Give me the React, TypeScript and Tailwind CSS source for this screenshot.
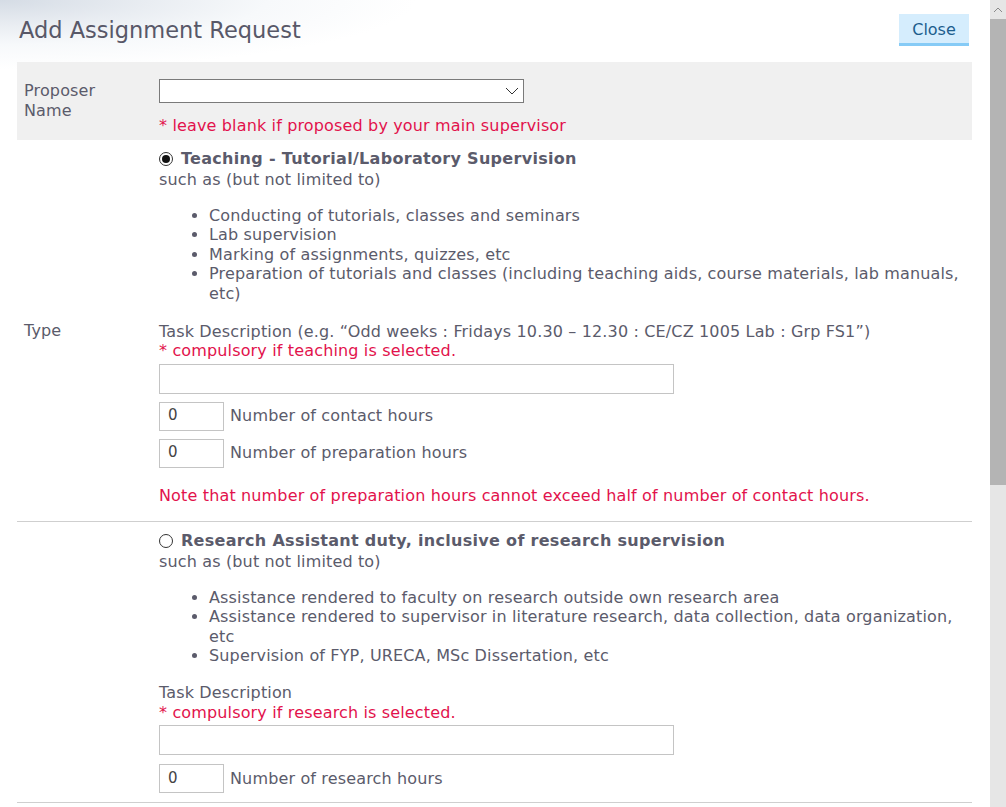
import React from "react";

const font = { fontFamily: '"DejaVu Sans", Verdana, sans-serif' };

function Radio({ checked }: { checked?: boolean }) {
  return (
    <span className="inline-flex w-[14px] h-[14px] rounded-full border border-[#333] bg-white items-center justify-center mr-[8px] shrink-0">
      {checked && <span className="w-[8px] h-[8px] rounded-full bg-[#111]" />}
    </span>
  );
}

function NumBox({ label }: { label: string }) {
  return (
    <div className="flex items-center h-[29px] mb-[8px]">
      <div className="w-[65px] h-[29px] border border-[#c4c4c4] bg-white flex items-center pl-[8px] text-[15px] text-[#444]">0</div>
      <span className="ml-[6px]">{label}</span>
    </div>
  );
}

export default function App() {
  return (
    <div className="w-[1006px] h-[807px] overflow-hidden bg-white relative text-[16px] leading-[19.6px] tracking-[0.15px] text-[#5b5b6b]" style={font}>
      <div className="absolute left-0 top-0 w-[420px] h-[70px] bg-[radial-gradient(ellipse_at_top_left,#d5dce5_0%,#e9edf2_25%,#f7f9fb_45%,rgba(255,255,255,0)_70%)]" />
      {/* scrollbar */}
      <div className="absolute right-0 top-0 w-[16px] h-[807px] bg-[#e6e6e6] flex flex-col">
        <div className="h-[19px] flex items-center justify-center">
          <svg width="10" height="6" viewBox="0 0 10 6"><path d="M1 5 L5 1 L9 5" fill="none" stroke="#8a8a8a" strokeWidth="1" /></svg>
        </div>
        <div className="h-[466px] bg-[#b4b4b4]" />
      </div>

      <div className="relative w-[990px] pl-[17px] pr-[18px]">
        <div className="flex items-center justify-between h-[62px] pb-[4px]">
          <h1 className="text-[22.5px] tracking-normal text-[#585868] pl-[2px] pt-[3px]">Add Assignment Request</h1>
          <button className="w-[70px] h-[32px] bg-[#d5edfd] border-b-[3px] border-[#86cbf6] text-[#1d5d8d] text-[16px] tracking-normal mr-[3px] mt-[1px] pt-[3px]">Close</button>
        </div>

        <div className="flex bg-[#f0f0f0] h-[78px]">
          <div className="w-[142px] pl-[7px] flex items-center">Proposer<br />Name</div>
          <div className="pt-[17px]">
            <div className="w-[365px] h-[24px] bg-white border border-[#7a7a7a] flex items-center justify-end pr-[4px]">
              <svg width="14" height="8" viewBox="0 0 14 8"><path d="M1 1 L7 7 L13 1" fill="none" stroke="#333" strokeWidth="1" /></svg>
            </div>
            <div className="text-[#e2124c] mt-[13px]">* leave blank if proposed by your main supervisor</div>
          </div>
        </div>

        <div className="flex border-b border-[#cfcfcf] h-[382px]">
          <div className="w-[142px] pl-[7px] flex items-center">Type</div>
          <div className="w-[813px] pt-[9px]">
            <div className="flex items-center h-[20px] font-bold tracking-[0.3px]"><Radio checked />Teaching - Tutorial/Laboratory Supervision</div>
            <div className="mt-[1px]">such as (but not limited to)</div>
            <ul className="list-disc pl-[50px] mt-[16px]">
              <li>Conducting of tutorials, classes and seminars</li>
              <li>Lab supervision</li>
              <li>Marking of assignments, quizzes, etc</li>
              <li>Preparation of tutorials and classes (including teaching aids, course materials, lab manuals, etc)</li>
            </ul>
            <div className="mt-[18px]">Task Description (e.g. “Odd weeks : Fridays 10.30 – 12.30 : CE/CZ 1005 Lab : Grp FS1”)</div>
            <div className="text-[#e2124c]">* compulsory if teaching is selected.</div>
            <div className="w-[515px] h-[30px] border border-[#c4c4c4] bg-white mt-[3px] mb-[8px]" />
            <NumBox label="Number of contact hours" />
            <NumBox label="Number of preparation hours" />
            <div className="text-[#e2124c] mt-[18px]">Note that number of preparation hours cannot exceed half of number of contact hours.</div>
          </div>
        </div>

        <div className="flex border-b border-[#cfcfcf] h-[281px]">
          <div className="w-[142px] pl-[7px]" />
          <div className="w-[813px] pt-[9px]">
            <div className="flex items-center h-[20px] font-bold tracking-[0.3px]"><Radio />Research Assistant duty, inclusive of research supervision</div>
            <div className="mt-[1px]">such as (but not limited to)</div>
            <ul className="list-disc pl-[50px] mt-[16px]">
              <li>Assistance rendered to faculty on research outside own research area</li>
              <li>Assistance rendered to supervisor in literature research, data collection, data organization, etc</li>
              <li>Supervision of FYP, URECA, MSc Dissertation, etc</li>
            </ul>
            <div className="mt-[17px]">Task Description</div>
            <div className="text-[#e2124c]">* compulsory if research is selected.</div>
            <div className="w-[515px] h-[30px] border border-[#c4c4c4] bg-white mt-[3px] mb-[9px]" />
            <NumBox label="Number of research hours" />
          </div>
        </div>
      </div>
    </div>
  );
}
